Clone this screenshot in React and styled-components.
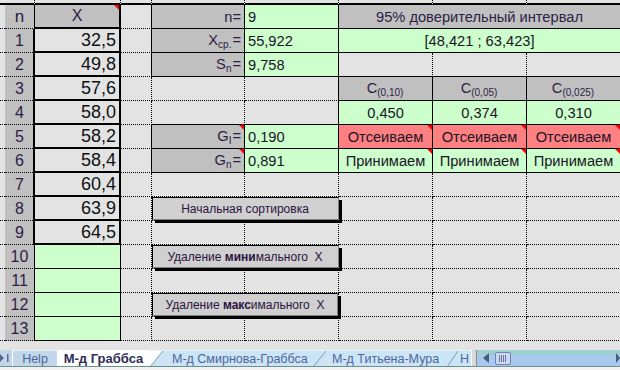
import React from "react";
import styled, { createGlobalStyle, css } from "styled-components";

const GlobalStyle = createGlobalStyle`
  html, body {
    margin: 0;
    padding: 0;
    background: #e3e3e3;
  }
  body {
    font-family: "Liberation Sans", Arial, sans-serif;
  }
`;

const colors = {
  plain: "#e3e3e3",
  gray: "#c0c0c0",
  green: "#ccffcc",
  red: "#ff8080",
};

const xValues = ["32,5", "49,8", "57,6", "58,0", "58,2", "58,4", "60,4", "63,9", "64,5"];
const critical = ["0,450", "0,374", "0,310"];
const levels = ["0,10", "0,05", "0,025"];

// rows that carry a macro button over the label/value columns
const buttons = {
  8: { width: 187, text: <>Начальная сортировка</> },
  10: { width: 187, text: <>Удаление <b>мини</b>мального  X</> },
  12: { width: 186, text: <>Удаление <b>макс</b>имального  X</> },
};

const Page = styled.div`
  width: 620px;
  height: 370px;
  overflow: hidden;
  display: flex;
  flex-direction: column;
  background: ${colors.plain};
`;

const Sheet = styled.div`
  display: grid;
  grid-template-columns: 5px 30px 86px 31px 93px 94px 94px 94px 94px;
  grid-template-rows: 5px repeat(14, 24px);
  width: 621px;
`;

const Cell = styled.div`
  box-sizing: border-box;
  display: flex;
  align-items: center;
  justify-content: ${(p) =>
    p.$align === "right" ? "flex-end" : p.$align === "left" ? "flex-start" : "center"};
  padding: 0 3px;
  overflow: hidden;
  white-space: nowrap;
  font-size: 14.67px;
  color: #1a1428;
  background: ${(p) => colors[p.$kind || "plain"]};
  border-right: 1px dotted #000;
  border-bottom: 1px dotted #000;
  grid-column: ${(p) => (p.$span ? `span ${p.$span}` : "auto")};
  ${(p) =>
    p.$solid &&
    css`
      border-right-style: solid;
      border-bottom-style: solid;
      box-shadow: -1px -1px 0 #000;
    `}
  ${(p) =>
    p.$note &&
    css`
      position: relative;
      &::after {
        content: "";
        position: absolute;
        top: 0;
        right: 0;
        border-left: 5px solid transparent;
        border-top: 5px solid #ff0000;
      }
    `}
`;

const TopCell = styled(Cell)`
  border-bottom: 2px solid #000;
`;

const RowHead = styled(Cell)`
  background: ${colors.gray};
  border-right: 1px solid #000;
  font-size: ${(p) => (p.$big ? 17 : 16)}px;
  color: #2b1d44;
`;

const XHead = styled(Cell)`
  background: ${colors.gray};
  border-right: 2px solid #000;
  border-bottom: 2px solid #000;
  font-size: 16px;
  color: #2b1d44;
`;

const XCell = styled(Cell)`
  justify-content: flex-end;
  font-size: 18px;
  color: #111;
  border-right: 2px solid #000;
  border-bottom: 2px solid #000;
  box-shadow: -2px 0 0 #000;
`;

const XEmpty = styled(Cell)`
  background: ${colors.green};
  border-right: 1px solid #000;
  border-bottom: 1px solid #000;
`;

const Label = styled(Cell)`
  color: #2b1d44;
`;

const Text = styled.span`
  line-height: 1;
`;

const Sub = styled.sub`
  font-size: 10px;
  line-height: 0;
  vertical-align: -3px;
  margin-right: 1px;
`;

const ButtonSlot = styled(Cell)`
  grid-column: span 2;
  align-items: flex-start;
  padding: 0;
  overflow: visible;
  position: relative;
  z-index: 1;
`;

const Button = styled.div`
  box-sizing: border-box;
  flex-shrink: 0;
  width: ${(p) => p.$width}px;
  height: 23px;
  display: flex;
  align-items: center;
  justify-content: center;
  font-size: 12px;
  color: #2b1240;
  white-space: pre;
  background: #d0d0d0;
  border-top: 1px solid #000;
  border-left: 1px solid #000;
  border-right: 1px solid #808080;
  border-bottom: 1px solid #808080;
  box-shadow: 3px 3px 0 #000;
  b {
    font-weight: bold;
  }
`;

const Footer = styled.div`
  margin-top: 9px;
  display: flex;
  height: 16px;
  border-bottom: 1px solid #6b9090;
  font-size: 12px;
`;

const FooterEnd = styled.div`
  flex: 1;
  background: #f2f2f2;
`;

const Nav = styled.div`
  width: 12px;
  flex-shrink: 0;
  display: flex;
  align-items: center;
  background: #c2d8ea;
  border-right: 1px solid #fff;
`;

const Tab = styled.div`
  box-sizing: border-box;
  width: ${(p) => p.$width}px;
  flex-shrink: 0;
  display: flex;
  align-items: center;
  overflow: hidden;
  white-space: nowrap;
  background: ${(p) => (p.$active ? "#ffffff" : p.$help ? "#c2d8ea" : "#cbe5f7")};
  color: ${(p) => (p.$active ? "#2e2e5a" : "#4e6497")};
  font-weight: ${(p) => (p.$active ? "bold" : "normal")};
  font-size: ${(p) => (p.$active ? 13 : 12.5)}px;
  border-top: 1px solid ${(p) => (p.$active ? "#fff" : "#e4f2fc")};
`;

const TabLabel = styled.span`
  flex: 1;
  text-align: ${(p) => (p.$left ? "left" : "center")};
  padding-left: ${(p) => p.$pad || 0}px;
`;

const Split = styled.div`
  width: 4px;
  flex-shrink: 0;
  background: #d8d8d8;
  border-left: 1px solid #fff;
  border-right: 1px solid #8a8a8a;
`;

const Scroll = styled.div`
  flex: 1;
  display: flex;
  align-items: center;
  gap: 5px;
  padding-left: 5px;
  background: linear-gradient(#9dcfcf 0 5px, #a8c8ee 5px);
`;

const Thumb = styled.div`
  box-sizing: border-box;
  width: 16px;
  height: 13px;
  display: flex;
  align-items: center;
  justify-content: center;
  background: #cbdaf2;
  border: 1px solid #7382b4;
  border-radius: 2px;
`;

const EndArrow = styled.div`
  margin-left: auto;
  display: flex;
`;

const Slant = ({ from, to, w = 14 }) => (
  <svg width={w} height="16" viewBox={`0 0 ${w} 16`} style={{ flexShrink: 0 }}>
    <rect width={w} height="16" fill={to} />
    <polygon points={`0,0 ${w - 1},0 0,16`} fill={from} />
    <line x1="0" y1="16" x2={w - 1} y2="0" stroke="#7c9ca8" strokeWidth="1" />
  </svg>
);

const restOfRow = (r) => {
  switch (r) {
    case 1:
      return [
        <Cell key="e" />,
        <Label key="l" $kind="gray" $solid $align="right">
          <Text>X<Sub>ср.</Sub>=</Text>
        </Label>,
        <Cell key="v" $kind="green" $solid $align="left">55,922</Cell>,
        <Cell key="b" $kind="green" $solid $span={3}>[48,421 ; 63,423]</Cell>,
      ];
    case 2:
      return [
        <Cell key="e" />,
        <Label key="l" $kind="gray" $solid $align="right">
          <Text>S<Sub>n</Sub>=</Text>
        </Label>,
        <Cell key="v" $kind="green" $solid $align="left">9,758</Cell>,
        <Cell key="p1" />,
        <Cell key="p2" />,
        <Cell key="p3" />,
      ];
    case 3:
      return [
        <Cell key="e" />,
        <Cell key="l" />,
        <Cell key="v" />,
        ...levels.map((lv) => (
          <Label key={lv} $kind="gray" $solid>
            <Text>C<Sub>({lv})</Sub></Text>
          </Label>
        )),
      ];
    case 4:
      return [
        <Cell key="e" />,
        <Cell key="l" />,
        <Cell key="v" />,
        ...critical.map((c) => (
          <Cell key={c} $kind="green" $solid>{c}</Cell>
        )),
      ];
    case 5:
      return [
        <Cell key="e" />,
        <Label key="l" $kind="gray" $solid $note $align="right">
          <Text>G<Sub>I</Sub>=</Text>
        </Label>,
        <Cell key="v" $kind="green" $solid $align="left">0,190</Cell>,
        ...[0, 1, 2].map((i) => (
          <Cell key={i} $kind="red" $solid $note>Отсеиваем</Cell>
        )),
      ];
    case 6:
      return [
        <Cell key="e" />,
        <Label key="l" $kind="gray" $solid $note $align="right">
          <Text>G<Sub>n</Sub>=</Text>
        </Label>,
        <Cell key="v" $kind="green" $solid $align="left">0,891</Cell>,
        ...[0, 1, 2].map((i) => (
          <Cell key={i} $kind="green" $solid $note>Принимаем</Cell>
        )),
      ];
    default:
      if (buttons[r]) {
        return [
          <Cell key="e" />,
          <ButtonSlot key="btn">
            <Button $width={buttons[r].width}>{buttons[r].text}</Button>
          </ButtonSlot>,
          <Cell key="p1" />,
          <Cell key="p2" />,
          <Cell key="p3" />,
        ];
      }
      return [0, 1, 2, 3, 4, 5].map((i) => <Cell key={i} />);
  }
};

const App = () => {
  const rows = Array.from({ length: 13 }, (_, i) => i + 1);
  return (
    <Page>
      <GlobalStyle />
      <Sheet>
        {Array.from({ length: 9 }, (_, i) => (
          <TopCell key={"t" + i} />
        ))}

        <Cell />
        <RowHead $big>n</RowHead>
        <XHead $note>X</XHead>
        <Cell />
        <Label $kind="gray" $solid $align="right">n=</Label>
        <Cell $kind="green" $solid $align="left">9</Cell>
        <Label $kind="gray" $solid $span={3}>95% доверительный интервал</Label>

        {rows.map((r) => (
          <React.Fragment key={r}>
            <Cell />
            <RowHead>{r}</RowHead>
            {r <= xValues.length ? <XCell>{xValues[r - 1]}</XCell> : <XEmpty />}
            {restOfRow(r)}
          </React.Fragment>
        ))}
      </Sheet>

      <Footer>
        <Nav>
          <svg width="12" height="12" viewBox="0 0 12 12">
            <polygon points="0,2 4,6 0,10" fill="#56698f" />
            <rect x="7" y="2" width="1.5" height="8" fill="#56698f" />
          </svg>
        </Nav>
        <Tab $help $width={44}>
          <TabLabel>Help</TabLabel>
        </Tab>
        <Tab $active $width={93}>
          <TabLabel>М-д Граббса</TabLabel>
        </Tab>
        <Tab $width={163}>
          <Slant from="#ffffff" to="#cbe5f7" />
          <TabLabel $left $pad={8}>М-д Смирнова-Граббса</TabLabel>
        </Tab>
        <Tab $width={134}>
          <Slant from="#cbe5f7" to="#cbe5f7" />
          <TabLabel $left $pad={5}>М-д Титьена-Мура</TabLabel>
        </Tab>
        <Tab $width={24}>
          <Slant from="#cbe5f7" to="#cbe5f7" w={12} />
          <TabLabel $left $pad={1}>Н</TabLabel>
        </Tab>
        <Split />
        <Scroll>
          <svg width="8" height="10" viewBox="0 0 8 10">
            <polygon points="7,0 7,10 1,5" fill="#4a5a7c" />
          </svg>
          <Thumb>
            <svg width="8" height="7" viewBox="0 0 8 7">
              {[0, 2, 4, 6].map((x) => (
                <rect key={x} x={x} y="0" width="1" height="7" fill="#6a7699" />
              ))}
            </svg>
          </Thumb>
          <EndArrow>
            <svg width="4" height="10" viewBox="0 0 4 10">
              <polygon points="0,0 4,5 0,10" fill="#4a5a7c" />
            </svg>
          </EndArrow>
        </Scroll>
      </Footer>
      <FooterEnd />
    </Page>
  );
};

export default App;
